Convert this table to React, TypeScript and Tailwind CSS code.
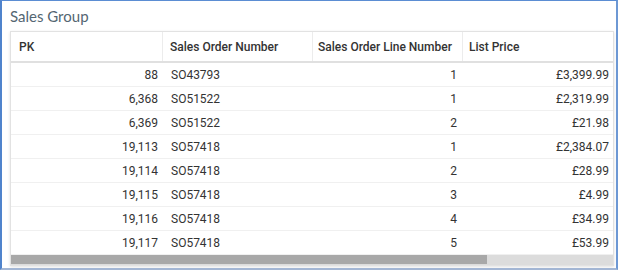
import React from "react";

const rows = [
  ["88", "SO43793", "1", "£3,399.99"],
  ["6,368", "SO51522", "1", "£2,319.99"],
  ["6,369", "SO51522", "2", "£21.98"],
  ["19,113", "SO57418", "1", "£2,384.07"],
  ["19,114", "SO57418", "2", "£28.99"],
  ["19,115", "SO57418", "3", "£4.99"],
  ["19,116", "SO57418", "4", "£34.99"],
  ["19,117", "SO57418", "5", "£53.99"],
];

export default function App() {
  return (
    <div className="w-[618px] h-[270px] bg-white box-border border-l-2 border-t border-r-2 border-b-2 border-l-[#4f83cc] border-t-[#5b8dd3] border-r-[#6d98d4] border-b-[#a3b6d4] flex flex-col overflow-hidden">
      <div
        className="h-[30px] pl-[8px] pt-[5px] text-[15px] leading-[20px] text-[#546672]"
        style={{ fontFamily: "Lato, 'Open Sans', sans-serif" }}
      >
        Sales Group
      </div>
      <div
        className="ml-[8px] w-[604px] border border-[#e2e2e2] shadow-[0_1px_3px_rgba(0,0,0,0.12)] text-[12px] text-[#333] flex flex-col"
        style={{ fontFamily: "Roboto, 'Liberation Sans', sans-serif" }}
      >
        <div className="flex h-[31px] border-b-2 border-[#e0e0e0] font-medium">
          <div className="w-[152px] border-r border-[#ececec] pl-[8px] flex items-center">PK</div>
          <div className="w-[150px] border-r border-[#ececec] pl-[7px] flex items-center">Sales Order Number</div>
          <div className="w-[150px] border-r border-[#ececec] pl-[5px] flex items-center">Sales Order Line Number</div>
          <div className="w-[150px] pl-[6px] flex items-center">List Price</div>
        </div>
        {rows.map((r, i) => (
          <div key={i} className="flex h-[24px] border-b border-[#f0f0f0] items-center">
            <div className="w-[152px] pr-[5px] text-right">{r[0]}</div>
            <div className="w-[150px] pl-[8px]">{r[1]}</div>
            <div className="w-[150px] pr-[6px] text-right">{r[2]}</div>
            <div className="w-[150px] pr-[4px] text-right">{r[3]}</div>
          </div>
        ))}
        <div className="h-[10px] bg-[#dcdcdc] flex">
          <div className="w-[476px] h-[9px] bg-[#a8a8a8]" />
        </div>
      </div>
    </div>
  );
}
